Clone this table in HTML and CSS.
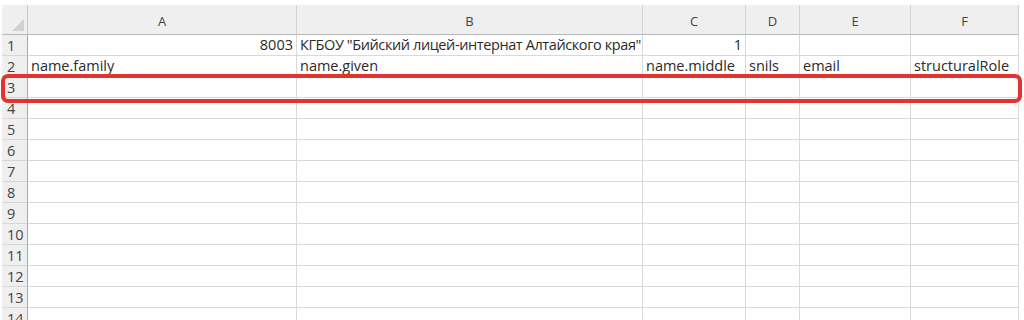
FILE: index.html
```html
<!DOCTYPE html>
<html lang="ru">
<head>
<meta charset="utf-8">
<title>Лист1</title>
<link rel="stylesheet" href="styles.css">
</head>
<body>
<div class="sheet">
  <div class="grid">
    <div class="corner"><span class="tri"></span></div>
    <div class="colhead">A</div>
    <div class="colhead">B</div>
    <div class="colhead">C</div>
    <div class="colhead">D</div>
    <div class="colhead">E</div>
    <div class="colhead">F</div>

    <div class="rowhead">1</div>
    <div class="cell num">8003</div>
    <div class="cell tight">КГБОУ "Бийский лицей-интернат Алтайского края"</div>
    <div class="cell num">1</div>
    <div class="cell"></div>
    <div class="cell"></div>
    <div class="cell"></div>

    <div class="rowhead">2</div>
    <div class="cell">name.family</div>
    <div class="cell">name.given</div>
    <div class="cell">name.middle</div>
    <div class="cell">snils</div>
    <div class="cell">email</div>
    <div class="cell">structuralRole</div>

    <div class="rowhead">3</div>
    <div class="cell"></div><div class="cell"></div><div class="cell"></div><div class="cell"></div><div class="cell"></div><div class="cell"></div>
    <div class="rowhead">4</div>
    <div class="cell"></div><div class="cell"></div><div class="cell"></div><div class="cell"></div><div class="cell"></div><div class="cell"></div>
    <div class="rowhead">5</div>
    <div class="cell"></div><div class="cell"></div><div class="cell"></div><div class="cell"></div><div class="cell"></div><div class="cell"></div>
    <div class="rowhead">6</div>
    <div class="cell"></div><div class="cell"></div><div class="cell"></div><div class="cell"></div><div class="cell"></div><div class="cell"></div>
    <div class="rowhead">7</div>
    <div class="cell"></div><div class="cell"></div><div class="cell"></div><div class="cell"></div><div class="cell"></div><div class="cell"></div>
    <div class="rowhead">8</div>
    <div class="cell"></div><div class="cell"></div><div class="cell"></div><div class="cell"></div><div class="cell"></div><div class="cell"></div>
    <div class="rowhead">9</div>
    <div class="cell"></div><div class="cell"></div><div class="cell"></div><div class="cell"></div><div class="cell"></div><div class="cell"></div>
    <div class="rowhead">10</div>
    <div class="cell"></div><div class="cell"></div><div class="cell"></div><div class="cell"></div><div class="cell"></div><div class="cell"></div>
    <div class="rowhead">11</div>
    <div class="cell"></div><div class="cell"></div><div class="cell"></div><div class="cell"></div><div class="cell"></div><div class="cell"></div>
    <div class="rowhead">12</div>
    <div class="cell"></div><div class="cell"></div><div class="cell"></div><div class="cell"></div><div class="cell"></div><div class="cell"></div>
    <div class="rowhead">13</div>
    <div class="cell"></div><div class="cell"></div><div class="cell"></div><div class="cell"></div><div class="cell"></div><div class="cell"></div>
    <div class="rowhead">14</div>
    <div class="cell"></div><div class="cell"></div><div class="cell"></div><div class="cell"></div><div class="cell"></div><div class="cell"></div>
  </div>
  <div class="highlight"></div>
</div>
</body>
</html>
```

FILE: styles.css
```css
html, body {
  margin: 0;
  padding: 0;
  background: #ffffff;
  overflow: hidden;
}

.sheet {
  position: relative;
  width: 1024px;
  height: 320px;
  padding: 5px 0 0 2px;
  box-sizing: border-box;
  font-family: "Open Sans", "Liberation Sans", sans-serif;
  color: #2b2b2b;
}

.grid {
  display: grid;
  grid-template-columns: 26px 269px 346px 103px 54px 111px 108px;
  grid-template-rows: 30px repeat(14, 21px);
}

.corner {
  position: relative;
  background: #efefef;
  border-right: 1px solid #c8c8c8;
  border-bottom: 1px solid #b9b9b9;
}

.corner .tri {
  position: absolute;
  right: 3px;
  bottom: 3px;
  width: 0;
  height: 0;
  border-left: 12px solid transparent;
  border-bottom: 12px solid #d2d2d2;
}

.colhead {
  background: #efefef;
  border-right: 1px solid #d2d2d2;
  border-bottom: 1px solid #b9b9b9;
  display: flex;
  align-items: center;
  justify-content: center;
  font-size: 13px;
  color: #444;
  padding-top: 2px;
}

.rowhead {
  background: #efefef;
  border-right: 1px solid #a9a9a9;
  border-bottom: 1px solid #d6d6d6;
  font-size: 14.5px;
  color: #444;
  display: flex;
  align-items: center;
  padding-left: 5px;
}

.cell {
  border-right: 1px solid #d9d9d9;
  border-bottom: 1px solid #d9d9d9;
  font-size: 14.5px;
  line-height: 20px;
  padding: 0 3px;
  white-space: nowrap;
  overflow: visible;
  display: flex;
  align-items: flex-end;
}

.cell.num {
  justify-content: flex-end;
}

/* the long Cyrillic title fits inside column B */
.cell.tight {
  letter-spacing: -0.4px;
}

.highlight {
  position: absolute;
  left: 1px;
  top: 74px;
  width: 1021px;
  height: 29px;
  box-sizing: border-box;
  border: 4px solid #e4332f;
  border-radius: 7px;
}
```
